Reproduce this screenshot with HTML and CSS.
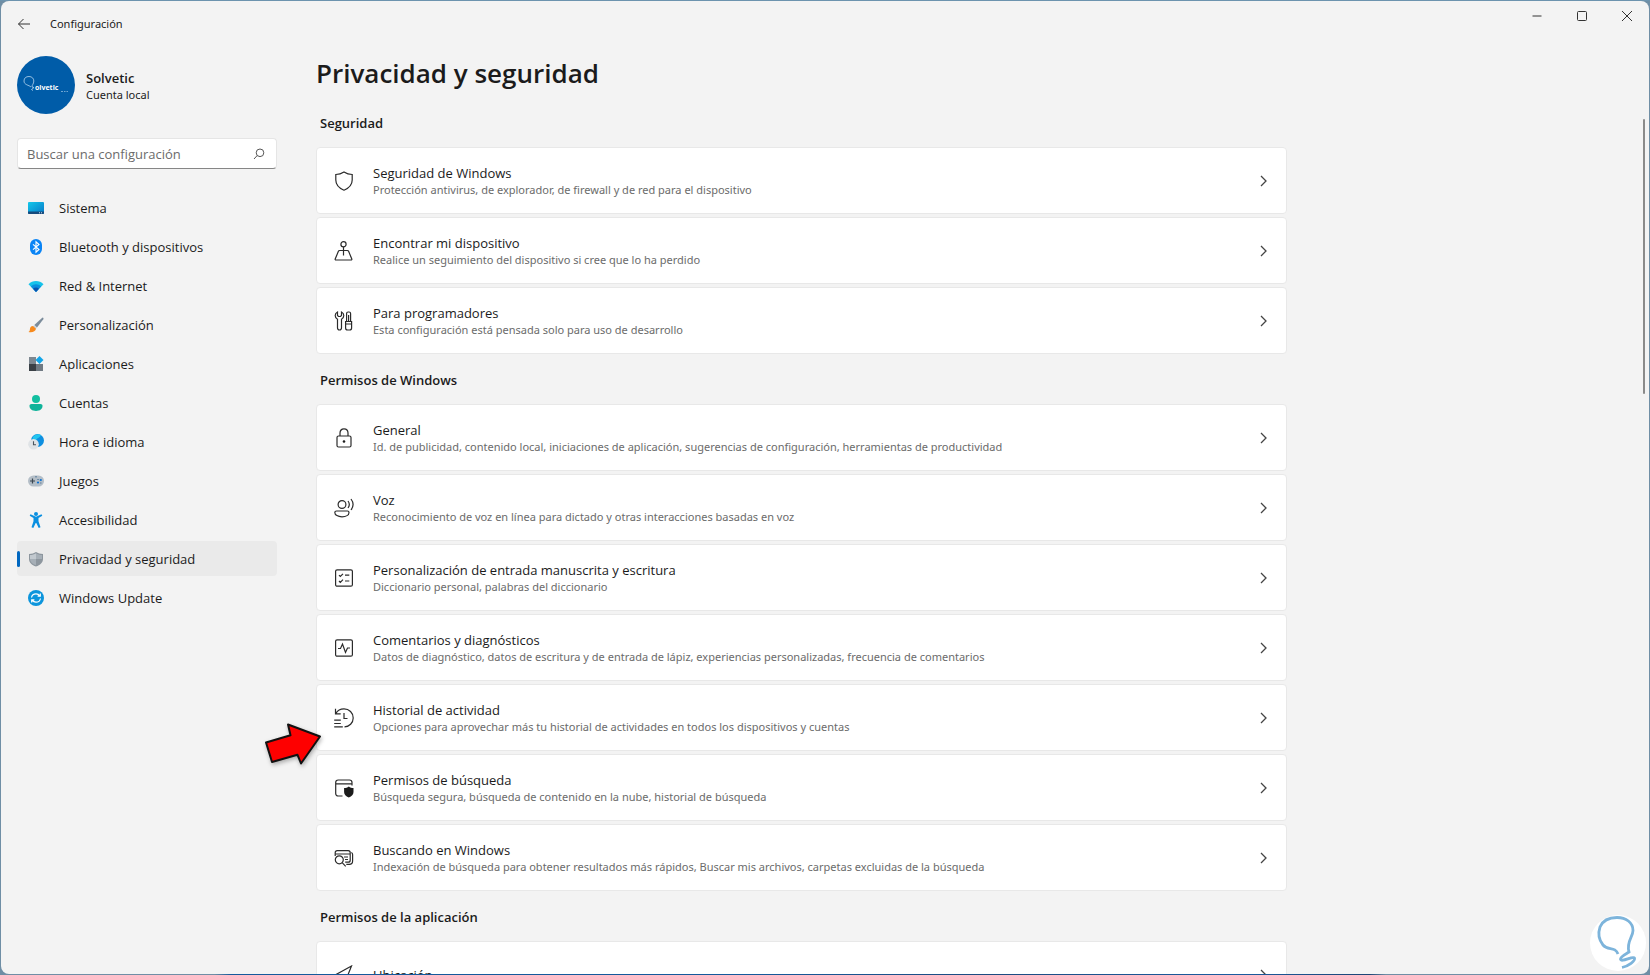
FILE: index.html
```html
<!DOCTYPE html>
<html lang="es">
<head>
  <meta charset="UTF-8">
  <meta name="viewport" content="width=device-width, initial-scale=1">
  <title>Configuración</title>
  <link rel="stylesheet" href="styles.css">
</head>
<body>
  <div class="window">
    <header class="titlebar">
      <button class="back" aria-label="Atrás">
        <svg width="14" height="12" viewBox="0 0 14 12"><path d="M13 6H1.5M6.5 1l-5 5 5 5"/></svg>
      </button>
      <span class="app-name">Configuración</span>
      <div class="controls">
        <button aria-label="Minimizar"><svg width="12" height="12" viewBox="0 0 12 12"><path d="M1.5 6h9"/></svg></button>
        <button aria-label="Maximizar"><svg width="12" height="12" viewBox="0 0 12 12"><rect x="1.5" y="1.5" width="9" height="9" rx="1"/></svg></button>
        <button aria-label="Cerrar"><svg width="12" height="12" viewBox="0 0 12 12"><path d="M1 1l10 10M11 1L1 11"/></svg></button>
      </div>
    </header>

    <div class="layout">
      <aside class="sidebar">
        <div class="user">
          <svg class="avatar" width="58" height="58" viewBox="0 0 58 58">
            <circle cx="29" cy="29" r="29" fill="#005ca8"/>
            <path d="M14 31c-2-2-7-2-7-6 0-3 2-4.500 5-4.500 3 0 4.800 2 4.800 4.500 0 3-2 4-1.800 6l2 .5-2.500 2 1.500 1" fill="none" stroke="#b9d6ee" stroke-width=".8"/>
            <text x="18" y="34" class="avatar-text">olvetic</text>
            <path d="M44 35.500h2M47 35.500h1.500M49.500 35.500h1.500" stroke="#6fa5d2"/>
          </svg>
          <div>
            <div class="user-name">Solvetic</div>
            <div class="user-type">Cuenta local</div>
          </div>
        </div>

        <form class="search">
          <input type="text" placeholder="Buscar una configuración" aria-label="Buscar una configuración">
          <svg width="12" height="12" viewBox="0 0 12 12"><circle cx="7" cy="4.800" r="3.800"/><path d="M4.200 7.500L1 11"/></svg>
        </form>

        <nav class="menu">
          <a href="#">
            <svg width="16" height="16" viewBox="0 0 16 16">
              <defs><linearGradient id="screen" x1="0" y1="0" x2="1" y2="1"><stop offset="0" stop-color="#13c8ea"/><stop offset="1" stop-color="#0778c8"/></linearGradient></defs>
              <rect y="2" width="16" height="12" rx="1" fill="url(#screen)"/><path d="M0 11.500h16V13a1 1 0 0 1-1 1H1a1 1 0 0 1-1-1z" fill="#174a7c"/><path d="M11 12.800h1M13 12.800h1" stroke="#cde"/>
            </svg>
            Sistema
          </a>
          <a href="#">
            <svg width="16" height="16" viewBox="0 0 16 16">
              <rect x="2" width="12" height="16" rx="6" fill="#0a84f5"/><path d="M5 5.300l6 5.200-3 2.700V2.800l3 2.700-6 5.200" fill="none" stroke="#fff" stroke-width="1.100"/>
            </svg>
            Bluetooth y dispositivos
          </a>
          <a href="#">
            <svg width="16" height="16" viewBox="0 0 16 16">
              <path d="M.5 6.200C4.500 1.900 11.500 1.900 15.500 6.200L8 14z" fill="#16c3ea"/><path d="M2.900 8.600c2.800-3 7.400-3 10.200 0L8 14z" fill="#0b8fdd"/><path d="M5 10.800c1.700-1.700 4.300-1.700 6 0L8 14z" fill="#0a53ae"/>
            </svg>
            Red &amp; Internet
          </a>
          <a href="#">
            <svg width="16" height="16" viewBox="0 0 16 16">
              <path d="M14.500.5c.9 0 1.300.9.800 1.700L9 10.500 6.300 8z" fill="#7b8c9b"/><path d="M6.300 8L9 10.500 7.800 12 5 9.400z" fill="#c9d2da"/><path d="M5 9l3 2.800c-.6 2.700-3.500 4-7.500 3.200 1.500-.8 1.300-2 1.500-3.400C2.300 9.700 3.500 9 5 9z" fill="#f78a1d"/>
            </svg>
            Personalización
          </a>
          <a href="#">
            <svg width="16" height="16" viewBox="0 0 16 16">
              <path d="M1 1h7v7H1z" fill="#7d8790"/><path d="M1 8h7v7H1z" fill="#3a4046"/><path d="M8 8h7v7H8z" fill="#707a83"/><path d="M11.500 0l4 4-4 4-4-4z" fill="#12a5e8"/>
            </svg>
            Aplicaciones
          </a>
          <a href="#">
            <svg width="16" height="16" viewBox="0 0 16 16">
              <circle cx="8" cy="4" r="4" fill="#12bfa0"/><path d="M3.500 9h9c1.200 0 2 .8 2 1.800C14.500 14 12 16 8 16s-6.500-2-6.500-5.200C1.500 9.800 2.300 9 3.500 9z" fill="#0fb39a"/>
            </svg>
            Cuentas
          </a>
          <a href="#">
            <svg width="16" height="16" viewBox="0 0 16 16">
              <circle cx="9.500" cy="6.500" r="6.500" fill="#0e8fe0"/><path d="M5 3c2-3 6-3.500 8-2-1 3-5 3-5 6H4z" fill="#22c6ef"/><circle cx="5.500" cy="10.300" r="5.300" fill="#dfe3e6"/><path d="M5.500 7.300v3.500H8" fill="none" stroke="#4b545c" stroke-width="1.100"/>
            </svg>
            Hora e idioma
          </a>
          <a href="#">
            <svg width="16" height="16" viewBox="0 0 16 16">
              <rect y="2.500" width="16" height="11" rx="5.500" fill="#b4bec7"/><path d="M2 8h5M4.500 5.500v5" stroke="#3b4650" stroke-width="1.200"/><circle cx="10" cy="9.500" r="1.100" fill="#0a6fd0"/><circle cx="12.800" cy="7" r="1.100" fill="#0a6fd0"/><path d="M9.300 6.500h1.500M12 10h1.500M7 3.800h2" stroke="#5c7e9c"/>
            </svg>
            Juegos
          </a>
          <a href="#">
            <svg width="16" height="16" viewBox="0 0 16 16">
              <circle cx="8" cy="2" r="2" fill="#0a8fe0"/><path d="M2.500 2.200L8 4.800l5.500-2.600.8 1.600L10.500 6v3.300l2 6-1.800.7L8.300 11h-.6l-2.400 5-1.800-.7 2-6V6L1.700 3.800z" fill="#0a8fe0"/>
            </svg>
            Accesibilidad
          </a>
          <a href="#" class="active">
            <svg width="16" height="16" viewBox="0 0 16 16">
              <path d="M8 1c2 1.300 4 2 7 2v5c0 3.500-2.800 6-7 7.500C3.800 14 1 11.500 1 8V3c3 0 5-.7 7-2z" fill="#8d969e"/><path d="M8 2.200V8H2V4c2.500 0 4.200-.7 6-1.800z" fill="#c2c9cf"/><path d="M8 2.200C9.800 3.300 11.500 4 14 4v4H8z" fill="#a6afb7"/><path d="M2 8h6v6.300C4.300 13 2 11 2 8z" fill="#a6afb7"/>
            </svg>
            Privacidad y seguridad
          </a>
          <a href="#">
            <svg width="16" height="16" viewBox="0 0 16 16">
              <circle cx="8" cy="8" r="8" fill="#0c95dc"/><path d="M3.500 7.500C4 5 6 3.800 8 3.800c1.600 0 3 .8 3.900 2M12.300 3.500v2.700H9.600M12.500 8.500c-.5 2.500-2.500 3.700-4.500 3.700-1.600 0-3-.8-3.900-2M3.700 12.500V9.800h2.700" fill="none" stroke="#fff" stroke-width="1.200"/>
            </svg>
            Windows Update
          </a>
        </nav>
      </aside>

      <main class="content">
        <h1>Privacidad y seguridad</h1>

        <section>
          <h2>Seguridad</h2>
          <a href="#" class="card">
            <svg class="icon" viewBox="0 0 20 20"><path d="M10 1c2.500 1.700 5 2.500 8.200 2.500V9c0 5-3 8-8.200 10.200C4.800 17 1.800 14 1.800 9V3.500C5 3.500 7.500 2.700 10 1z"/></svg>
            <span class="text"><span class="name">Seguridad de Windows</span><span class="desc">Protección antivirus, de explorador, de firewall y de red para el dispositivo</span></span>
            <svg class="chevron" viewBox="0 0 8 12"><path d="M1 1l5 5-5 5"/></svg>
          </a>
          <a href="#" class="card">
            <svg class="icon" viewBox="0 0 20 20"><circle cx="9.500" cy="3.200" r="2.600"/><path d="M9.500 5.800V14.500M5.600 9.500h7.800c.6 0 1 .3 1.200.8L17.800 18c.2.600-.1 1-.7 1H1.900c-.6 0-.9-.4-.7-1l3.200-7.700c.2-.5.600-.8 1.200-.8z"/></svg>
            <span class="text"><span class="name">Encontrar mi dispositivo</span><span class="desc">Realice un seguimiento del dispositivo si cree que lo ha perdido</span></span>
            <svg class="chevron" viewBox="0 0 8 12"><path d="M1 1l5 5-5 5"/></svg>
          </a>
          <a href="#" class="card">
            <svg class="icon" viewBox="0 0 20 20"><path d="M3.500 1C2 1.700 1.200 3 1.200 4.600c0 1.600.8 2.900 2.300 3.600v8.600c0 1.200.8 2.200 2 2.200s2-1 2-2.200V8.200c1.500-.7 2.300-2 2.300-3.600C9.800 3 9 1.700 7.500 1v3.500l-1 1h-2l-1-1zM12.600 10V2.500c0-.9.700-1.500 1.500-1.500h1c.8 0 1.500.6 1.500 1.500V10M11.600 10.500h6V17c0 1.200-.8 2-2 2h-2c-1.200 0-2-.8-2-2zM11.600 13h6M14.600 4v6"/></svg>
            <span class="text"><span class="name">Para programadores</span><span class="desc">Esta configuración está pensada solo para uso de desarrollo</span></span>
            <svg class="chevron" viewBox="0 0 8 12"><path d="M1 1l5 5-5 5"/></svg>
          </a>
        </section>

        <section>
          <h2>Permisos de Windows</h2>
          <a href="#" class="card">
            <svg class="icon" viewBox="0 0 20 20"><rect x="3" y="8" width="14" height="11" rx="1.500"/><path d="M6 8V5c0-2.500 1.700-4.200 4-4.200S14 2.500 14 5v3"/><circle class="solid" cx="10" cy="13.500" r="1.300"/></svg>
            <span class="text"><span class="name">General</span><span class="desc">Id. de publicidad, contenido local, iniciaciones de aplicación, sugerencias de configuración, herramientas de productividad</span></span>
            <svg class="chevron" viewBox="0 0 8 12"><path d="M1 1l5 5-5 5"/></svg>
          </a>
          <a href="#" class="card">
            <svg class="icon" viewBox="0 0 20 20"><circle cx="8" cy="6.500" r="3.900"/><path d="M2.500 13h11c1 0 1.500.6 1.500 1.400C15 17 12 18.800 8 18.800S.8 17 .8 14.400c0-.8.7-1.400 1.700-1.400zM14 3c1.500 2 1.500 5 0 7M17 1c2.500 3.300 2.500 7.700 0 11"/></svg>
            <span class="text"><span class="name">Voz</span><span class="desc">Reconocimiento de voz en línea para dictado y otras interacciones basadas en voz</span></span>
            <svg class="chevron" viewBox="0 0 8 12"><path d="M1 1l5 5-5 5"/></svg>
          </a>
          <a href="#" class="card">
            <svg class="icon" viewBox="0 0 20 20"><rect x="1.600" y="1.800" width="16.800" height="16.400" rx="1.500"/><path d="M5 7.200l1.300 1.300L9 5.800M11 7.200h4.300M5 13l1.300 1.300L9 11.600M11 13h4.300"/></svg>
            <span class="text"><span class="name">Personalización de entrada manuscrita y escritura</span><span class="desc">Diccionario personal, palabras del diccionario</span></span>
            <svg class="chevron" viewBox="0 0 8 12"><path d="M1 1l5 5-5 5"/></svg>
          </a>
          <a href="#" class="card">
            <svg class="icon" viewBox="0 0 20 20"><rect x="1.600" y="1.800" width="16.800" height="16.400" rx="1.500"/><path d="M4 10.500h2.500l2-4.500 3 8.500 2-4.500H16"/></svg>
            <span class="text"><span class="name">Comentarios y diagnósticos</span><span class="desc">Datos de diagnóstico, datos de escritura y de entrada de lápiz, experiencias personalizadas, frecuencia de comentarios</span></span>
            <svg class="chevron" viewBox="0 0 8 12"><path d="M1 1l5 5-5 5"/></svg>
          </a>
          <a href="#" class="card">
            <svg class="icon" viewBox="0 0 20 20"><path d="M1.500.8v5h5.200M2 5.300C3.500 2.500 6.500.9 10 .9c5.200 0 9.200 4 9.200 9s-4 9-8.700 9M10 5v5.500h3.500M.2 12.200h6.600M.2 15.500h6.600M.2 18.900h8.600"/></svg>
            <span class="text"><span class="name">Historial de actividad</span><span class="desc">Opciones para aprovechar más tu historial de actividades en todos los dispositivos y cuentas</span></span>
            <svg class="chevron" viewBox="0 0 8 12"><path d="M1 1l5 5-5 5"/></svg>
          </a>
          <a href="#" class="card">
            <svg class="icon" viewBox="0 0 20 20"><path d="M8.500 18H4.200c-1.500 0-2.500-1-2.500-2.500v-11C1.700 3 2.700 2 4.200 2h11.300C17 2 18 3 18 4.500v3M1.700 5.800H18"/><path class="solid" d="M14.800 8.500c1.500 1 2.800 1.500 4.700 1.500v4c0 2.500-1.700 4.300-4.700 5.500-3-1.200-4.700-3-4.700-5.500v-4c1.900 0 3.200-.5 4.700-1.500z"/></svg>
            <span class="text"><span class="name">Permisos de búsqueda</span><span class="desc">Búsqueda segura, búsqueda de contenido en la nube, historial de búsqueda</span></span>
            <svg class="chevron" viewBox="0 0 8 12"><path d="M1 1l5 5-5 5"/></svg>
          </a>
          <a href="#" class="card">
            <svg class="icon" viewBox="0 0 20 20"><path d="M1.200 8V4.800c0-1.300.8-2.100 2-2.100h11c1.200 0 2 .8 2 2.100v7.400c0 1.200-.8 2-2 2h-3M1.200 6h15M17.300 4.500c.8.300 1.300 1 1.300 2V13c0 2-1.300 3.400-3.300 3.400h-3M10 9h4M11 11.500h3"/><circle cx="5.300" cy="11.800" r="4"/><path d="M8.200 14.700l3.500 3.600"/></svg>
            <span class="text"><span class="name">Buscando en Windows</span><span class="desc">Indexación de búsqueda para obtener resultados más rápidos, Buscar mis archivos, carpetas excluidas de la búsqueda</span></span>
            <svg class="chevron" viewBox="0 0 8 12"><path d="M1 1l5 5-5 5"/></svg>
          </a>
        </section>

        <section>
          <h2>Permisos de la aplicación</h2>
          <a href="#" class="card">
            <svg class="icon" viewBox="0 0 20 20"><path d="M17.500 1L1.500 9.800l6.800 1.900 2.200 6.800z"/></svg>
            <span class="text"><span class="name">Ubicación</span></span>
            <svg class="chevron" viewBox="0 0 8 12"><path d="M1 1l5 5-5 5"/></svg>
          </a>
        </section>
      </main>
    </div>

    <div class="scrollbar"></div>

    <svg class="pointer" width="60" height="46" viewBox="0 0 60 46">
      <path d="M57 14.500L25 2.500l2.500 10.800L3 20.500l6 19.500 25.500-7.200 3.500 8.700z"/>
    </svg>

    <svg class="watermark" width="56" height="56" viewBox="0 0 56 56">
      <circle cx="28" cy="28" r="28" fill="#fff"/>
      <path d="M28 39c-3-8-10-3-15-9-4-5-5-12-3-18C13 5 20 2.500 27 2.500c9 0 16 5 16 13 0 7-7 11-4 21.500-3 2-9 4.500-8.500 7.500.8 3 13-4 14-1.500 1 3-6 8-12.500 9.500" fill="none" stroke="#7db4db" stroke-width="2.800"/>
    </svg>
  </div>
</body>
</html>
```
FILE: styles.css
```css
* {
  box-sizing: border-box;
}
body {
  margin: 0;
  height: 100vh;
  padding: 1px;
  overflow: hidden;
  background: linear-gradient(to right, #6f8ea5 0 13%, #145a9c 14% 45%, #1d4b80 60%, #1a5ca0 75%, #1d4575 83%, #6f8ea5 84%);
  font-family: "Segoe UI", "Open Sans", "Noto Sans", sans-serif;
  font-size: 13px;
  color: #1b1b1b;
  box-shadow: inset 0 1px #6c93ae;
}
a {
  color: inherit;
  text-decoration: none;
}
button {
  border: none;
  background: none;
  padding: 0;
}
svg {
  flex-shrink: 0;
}
.window {
  position: relative;
  height: 100%;
  overflow: hidden;
  background: #f3f3f3;
  border-radius: 8px;
}

/* title bar */
.titlebar {
  display: flex;
  align-items: center;
  height: 46px;
  padding-left: 16px;
}
.titlebar svg {
  fill: none;
  stroke: #333;
  display: block;
}
.app-name, .user-type, .desc {
  font-family: "Segoe UI", "Noto Sans", sans-serif;
  font-size: 11px;
  line-height: 16px;
}
.app-name {
  margin-left: 19px;
}
.controls {
  display: flex;
  align-self: flex-start;
  margin-left: auto;
}
.controls button {
  display: flex;
  align-items: center;
  justify-content: center;
  width: 45px;
  height: 30px;
}

.layout {
  display: flex;
  gap: 39px;
  padding: 9px 16px 0 16px;
}

/* sidebar */
.sidebar {
  flex: 0 0 260px;
}
.user {
  display: flex;
  align-items: center;
  gap: 11px;
}
.avatar-text {
  font-size: 7px;
  font-weight: bold;
  fill: #fff;
}
.user-name {
  padding-top: 2px;
  font-weight: 600;
  line-height: 18px;
}
.search {
  position: relative;
  margin: 24px 0 21px;
}
.search input {
  display: block;
  width: 100%;
  height: 31px;
  padding: 0 36px 0 9px;
  border: 1px solid #e5e5e5;
  border-bottom-color: #868686;
  border-radius: 4px;
  background: #fff;
  font-family: inherit;
  font-size: 13px;
}
.search input::placeholder {
  color: #6b6b6b;
}
.search svg {
  position: absolute;
  right: 12px;
  top: 10px;
  fill: none;
  stroke: #555;
}
.menu {
  display: flex;
  flex-direction: column;
  gap: 4px;
}
.menu a {
  position: relative;
  display: flex;
  align-items: center;
  gap: 15px;
  height: 35px;
  padding-left: 11px;
  border-radius: 4px;
}
.menu .active {
  background: #eaeaea;
}
.menu .active::before {
  content: "";
  position: absolute;
  left: 0;
  top: 10px;
  width: 3px;
  height: 16px;
  border-radius: 2px;
  background: #0067c0;
}

/* content */
.content {
  flex: 1;
  max-width: 971px;
}
h1 {
  margin: 0;
  padding-bottom: 7px;
  font-size: 26px;
  font-weight: 600;
  line-height: 34px;
}
h2 {
  margin: 0;
  padding: 16px 4px 14px;
  font-size: 13px;
  font-weight: 600;
  line-height: 20px;
}
.card {
  display: flex;
  align-items: center;
  height: 67px;
  padding: 0 18px 0 17px;
  margin-bottom: 3px;
  background: #fff;
  border: 1px solid #e8e8e8;
  border-radius: 4px;
}
.card:last-child {
  margin-bottom: 0;
}
.icon {
  width: 20px;
  height: 20px;
  fill: none;
  stroke: #2b2b2b;
  stroke-width: 1.2;
}
.icon .solid {
  fill: #1b1b1b;
  stroke: none;
}
.text {
  flex: 1;
  margin-left: 19px;
}
.name, .desc {
  display: block;
}
.name {
  line-height: 18px;
}
.desc {
  color: #6b6b6b;
}
.chevron {
  width: 8px;
  height: 12px;
  fill: none;
  stroke: #444;
  stroke-width: 1.3;
}

/* things that float over the page */
.scrollbar {
  position: absolute;
  right: 4px;
  top: 118px;
  width: 2px;
  height: 275px;
  border-radius: 1px;
  background: #8a8a8a;
}
.pointer {
  position: absolute;
  left: 262px;
  top: 721px;
  fill: #fe0000;
  stroke: #111;
  stroke-width: 2;
  stroke-linejoin: round;
  filter: drop-shadow(1px 2px 2px rgba(0, 0, 0, 0.3));
}
.watermark {
  position: absolute;
  right: 3px;
  bottom: 3px;
}
```
